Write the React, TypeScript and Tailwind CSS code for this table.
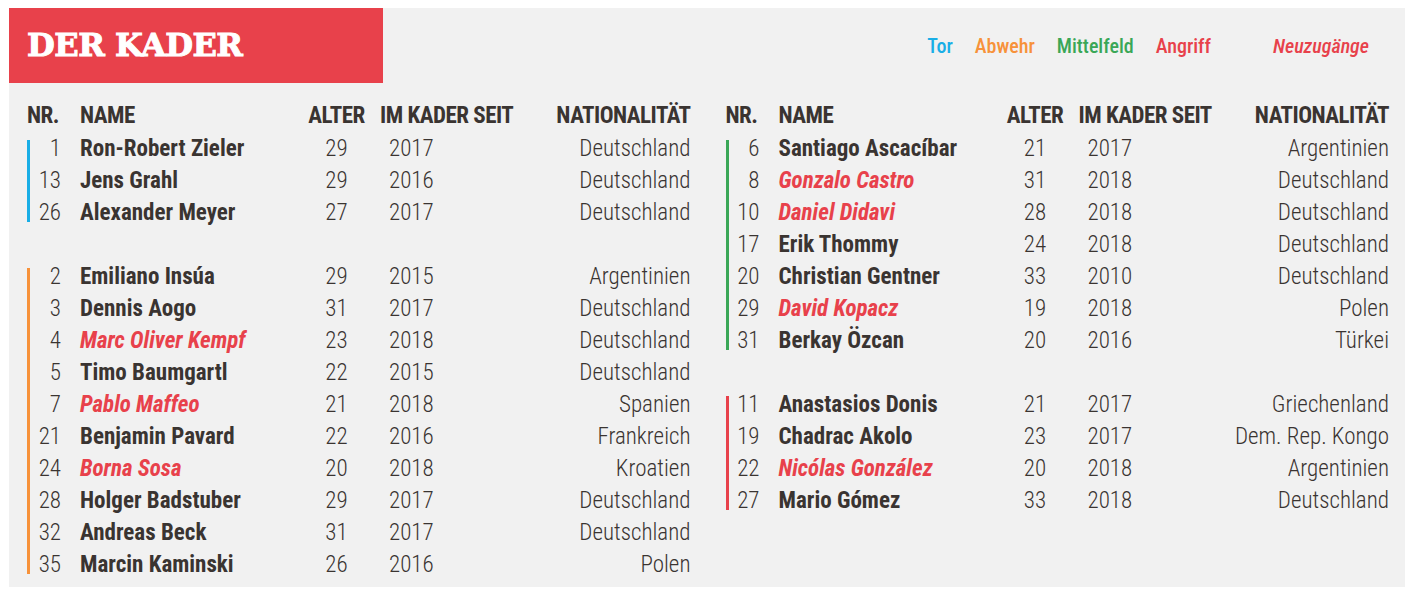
import React from "react";

type P = [string, string, string, string, string, boolean?];

const tor: P[] = [
  ["1", "Ron-Robert Zieler", "29", "2017", "Deutschland"],
  ["13", "Jens Grahl", "29", "2016", "Deutschland"],
  ["26", "Alexander Meyer", "27", "2017", "Deutschland"],
];
const abwehr: P[] = [
  ["2", "Emiliano Insúa", "29", "2015", "Argentinien"],
  ["3", "Dennis Aogo", "31", "2017", "Deutschland"],
  ["4", "Marc Oliver Kempf", "23", "2018", "Deutschland", true],
  ["5", "Timo Baumgartl", "22", "2015", "Deutschland"],
  ["7", "Pablo Maffeo", "21", "2018", "Spanien", true],
  ["21", "Benjamin Pavard", "22", "2016", "Frankreich"],
  ["24", "Borna Sosa", "20", "2018", "Kroatien", true],
  ["28", "Holger Badstuber", "29", "2017", "Deutschland"],
  ["32", "Andreas Beck", "31", "2017", "Deutschland"],
  ["35", "Marcin Kaminski", "26", "2016", "Polen"],
];
const mittelfeld: P[] = [
  ["6", "Santiago Ascacíbar", "21", "2017", "Argentinien"],
  ["8", "Gonzalo Castro", "31", "2018", "Deutschland", true],
  ["10", "Daniel Didavi", "28", "2018", "Deutschland", true],
  ["17", "Erik Thommy", "24", "2018", "Deutschland"],
  ["20", "Christian Gentner", "33", "2010", "Deutschland"],
  ["29", "David Kopacz", "19", "2018", "Polen", true],
  ["31", "Berkay Özcan", "20", "2016", "Türkei"],
];
const angriff: P[] = [
  ["11", "Anastasios Donis", "21", "2017", "Griechenland"],
  ["19", "Chadrac Akolo", "23", "2017", "Dem. Rep. Kongo"],
  ["22", "Nicólas González", "20", "2018", "Argentinien", true],
  ["27", "Mario Gómez", "33", "2018", "Deutschland"],
];

function HeaderRow() {
  return (
    <div className="grid grid-cols-[53px_228px_57px_148px_1fr] h-8 items-center leading-8 font-bold tracking-[-0.5px] whitespace-nowrap">
      <div>NR.</div>
      <div>NAME</div>
      <div className="text-center">ALTER</div>
      <div className="pl-[15px]">IM KADER SEIT</div>
      <div className="text-right">NATIONALITÄT</div>
    </div>
  );
}

function Row({ p }: { p: P }) {
  const [nr, name, alter, seit, nat, neu] = p;
  return (
    <div className="grid grid-cols-[50px_228px_57px_148px_1fr] h-8 items-center leading-8 whitespace-nowrap font-[350]">
      <div className="text-right pr-[19px]">{nr}</div>
      <div className={neu ? "font-bold italic text-[#e8414b]" : "font-bold"}>{name}</div>
      <div className="text-center">{alter}</div>
      <div className="pl-[24px]">{seit}</div>
      <div className="text-right">{nat}</div>
    </div>
  );
}

function Section({ rows, bar }: { rows: P[]; bar: string }) {
  return (
    <div className="flex">
      <div className={`w-[3px] my-[7px] shrink-0 ${bar}`} />
      <div className="flex-1 flex flex-col">
        {rows.map((p) => (
          <Row key={p[0] + p[1]} p={p} />
        ))}
      </div>
    </div>
  );
}

export default function App() {
  return (
    <div className="bg-white w-[1413px] h-[599px] pt-2 pl-[9px]">
      <div className="w-[1396px] h-[579px] bg-[#f1f1f1] text-[#3a3431] font-['Roboto',sans-serif] font-stretch-condensed text-[23px]">
        <div className="flex items-center h-[75px]">
          <div className="w-[374px] h-full bg-[#e8414b] flex items-center pl-[18px]">
            <span className="font-['DejaVu_Serif',serif] font-stretch-normal font-bold text-white text-[32px] tracking-[-0.5px] leading-none pb-[1px] [-webkit-text-stroke:1px_white]">
              DER KADER
            </span>
          </div>
          <div className="flex-1 flex items-center justify-end pr-[36px] gap-[22px] text-[20px] font-medium pt-[1px]">
            <span className="text-[#19aee6]">Tor</span>
            <span className="text-[#f7923a]">Abwehr</span>
            <span className="text-[#3aa757]">Mittelfeld</span>
            <span className="text-[#e8414b]">Angriff</span>
            <span className="text-[#e8414b] italic ml-[40px]">Neuzugänge</span>
          </div>
        </div>
        <div className="flex pl-[18px] pr-[16px] pt-[17px] gap-[35px]">
          <div className="flex-1 flex flex-col">
            <div className="mb-[1px]">
              <HeaderRow />
            </div>
            <Section rows={tor} bar="bg-[#19aee6]" />
            <div className="h-8" />
            <Section rows={abwehr} bar="bg-[#f7923a]" />
          </div>
          <div className="flex-1 flex flex-col">
            <div className="mb-[1px]">
              <HeaderRow />
            </div>
            <Section rows={mittelfeld} bar="bg-[#3aa757]" />
            <div className="h-8" />
            <Section rows={angriff} bar="bg-[#e8414b]" />
          </div>
        </div>
      </div>
    </div>
  );
}
